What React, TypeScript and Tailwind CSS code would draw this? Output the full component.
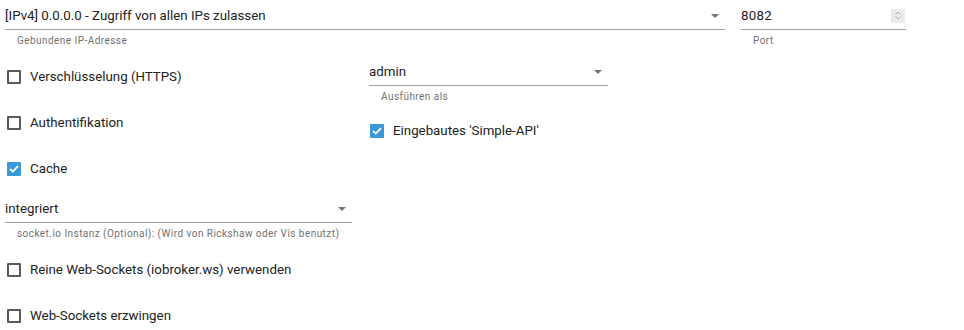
import React from 'react';

const font = { fontFamily: 'Roboto, "Liberation Sans", sans-serif' };

interface SelectProps {
    value: string;
    helper: string;
    width: string;
}

const Select: React.FC<SelectProps> = ({ value, helper, width }) => {
    return (
        <div className={width}>
            <div className="h-[30px] border-b border-[#9e9e9e] flex items-center pt-[2px] pr-[6px]">
                <span className="flex-1 text-[13.3px] text-[#222]">{value}</span>
                <span className="w-0 h-0 border-l-[4px] border-r-[4px] border-t-[4px] border-l-transparent border-r-transparent border-t-[#757575]" />
            </div>
            <div className="mt-[5px] pl-[12px] leading-[12px] text-[10px] tracking-[0.45px] text-[#707070] whitespace-nowrap">{helper}</div>
        </div>
    );
};

interface CheckProps {
    label: string;
    checked?: boolean;
    className?: string;
}

const Check: React.FC<CheckProps> = ({ label, checked, className }) => {
    return (
        <div className={`flex items-center h-[20px] ${className ?? ''}`}>
            {checked ? (
                <span className="w-[14px] h-[14px] rounded-[1px] bg-[#3a9ad9] flex items-center justify-center">
                    <svg width="10" height="8" viewBox="0 0 10 8">
                        <path d="M1 4 L3.8 6.6 L9 1.2" stroke="#fff" strokeWidth="1.8" fill="none" />
                    </svg>
                </span>
            ) : (
                <span className="w-[14px] h-[14px] rounded-[1px] border-2 border-[#5a5a5a]" />
            )}
            <span className="ml-[9px] text-[13.3px] text-[#222] whitespace-nowrap">{label}</span>
        </div>
    );
};

export default function App() {
    return (
        <div className="w-[964px] h-[330px] bg-white overflow-hidden" style={font}>
            {/* bind + port */}
            <div className="flex">
                <div className="ml-[5px]">
                    <Select value="[IPv4] 0.0.0.0 - Zugriff von allen IPs zulassen" helper="Gebundene IP-Adresse" width="w-[720px]" />
                </div>
                <div className="ml-[16px] w-[165px]">
                    <div className="h-[30px] border-b border-[#9e9e9e] flex items-center pt-[2px] pr-[1px]">
                        <span className="flex-1 text-[13.3px] tracking-[0.3px] text-[#222]">8082</span>
                        <span className="w-[14px] h-[14px] bg-[#ebebef] flex flex-col items-center justify-center gap-[1px]">
                            <svg width="6" height="4" viewBox="0 0 6 4">
                                <path d="M0.5 3.5 L3 1 L5.5 3.5" stroke="#a8a8a8" strokeWidth="1" fill="none" />
                            </svg>
                            <svg width="6" height="4" viewBox="0 0 6 4">
                                <path d="M0.5 0.5 L3 3 L5.5 0.5" stroke="#a8a8a8" strokeWidth="1" fill="none" />
                            </svg>
                        </span>
                    </div>
                    <div className="mt-[5px] pl-[12px] leading-[12px] text-[10px] tracking-[0.45px] text-[#707070]">Port</div>
                </div>
            </div>

            <div className="mt-[3px] flex">
                <div className="ml-[5px] w-[347px] flex flex-col">
                    <Check label="Verschlüsselung (HTTPS)" className="mt-[17px] ml-[2px]" />
                    <Check label="Authentifikation" className="mt-[26px] ml-[2px]" />
                    <Check label="Cache" checked className="mt-[26px] ml-[2px]" />
                    <div className="mt-[14px]">
                        <Select value="integriert" helper="socket.io Instanz (Optional): (Wird von Rickshaw oder Vis benutzt)" width="w-[347px]" />
                    </div>
                    <Check label="Reine Web-Sockets (iobroker.ws) verwenden" className="mt-[20px] ml-[2px]" />
                    <Check label="Web-Sockets erzwingen" className="mt-[26px] ml-[2px]" />
                </div>
                <div className="ml-[17px] flex flex-col">
                    <div className="mt-[6px]">
                        <Select value="admin" helper="Ausführen als" width="w-[239px]" />
                    </div>
                    <Check label="Eingebautes 'Simple-API'" checked className="mt-[18px] ml-[1px]" />
                </div>
            </div>
        </div>
    );
}
